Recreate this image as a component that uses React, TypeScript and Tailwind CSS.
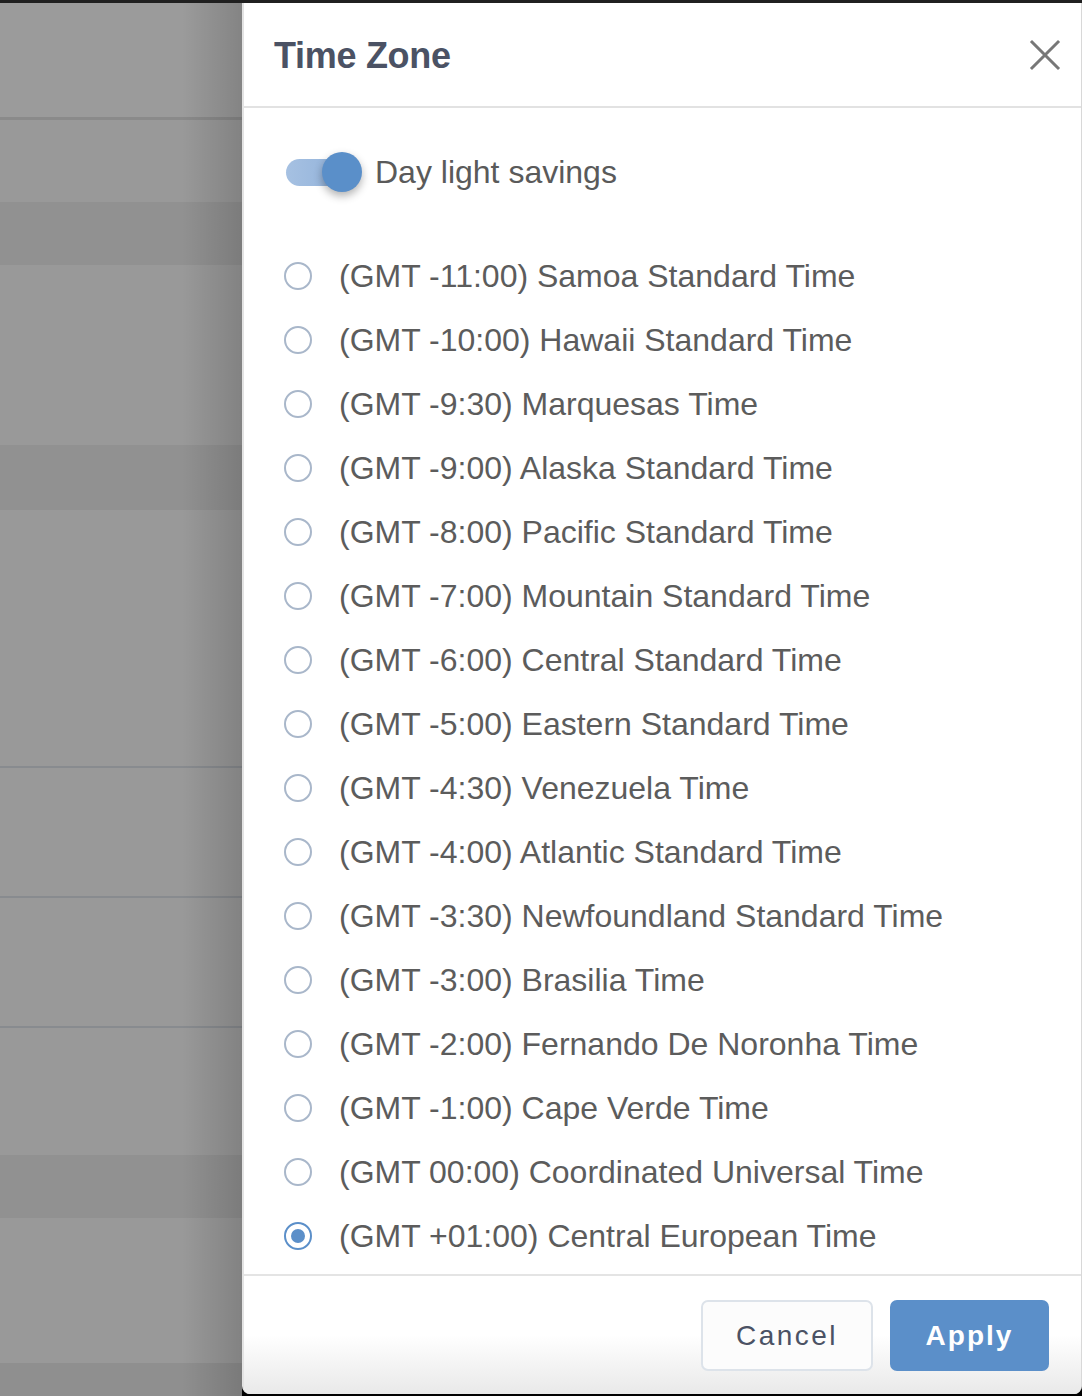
import React from "react";

const zones = [
  "(GMT -11:00) Samoa Standard Time",
  "(GMT -10:00) Hawaii Standard Time",
  "(GMT -9:30) Marquesas Time",
  "(GMT -9:00) Alaska Standard Time",
  "(GMT -8:00) Pacific Standard Time",
  "(GMT -7:00) Mountain Standard Time",
  "(GMT -6:00) Central Standard Time",
  "(GMT -5:00) Eastern Standard Time",
  "(GMT -4:30) Venezuela Time",
  "(GMT -4:00) Atlantic Standard Time",
  "(GMT -3:30) Newfoundland Standard Time",
  "(GMT -3:00) Brasilia Time",
  "(GMT -2:00) Fernando De Noronha Time",
  "(GMT -1:00) Cape Verde Time",
  "(GMT 00:00) Coordinated Universal Time",
  "(GMT +01:00) Central European Time",
];

function Backdrop() {
  return (
    <div className="relative w-[242px] flex flex-col bg-[#999999]">
      <div className="h-[114px] bg-[#9b9b9b]" />
      <div className="h-[3px] bg-[#8a8a8a]" />
      <div className="h-[82px] bg-[#999999]" />
      <div className="h-[63px] bg-[#919191]" />
      <div className="h-[180px] bg-[#999999]" />
      <div className="h-[65px] bg-[#919191]" />
      <div className="h-[256px] bg-[#999999]" />
      <div className="h-[2px] bg-[#888b8f]" />
      <div className="h-[128px] bg-[#999999]" />
      <div className="h-[2px] bg-[#888b8f]" />
      <div className="h-[128px] bg-[#999999]" />
      <div className="h-[2px] bg-[#888b8f]" />
      <div className="h-[127px] bg-[#999999]" />
      <div className="h-[63px] bg-[#919191]" />
      <div className="h-[145px] bg-[#999999]" />
      <div className="flex-1 bg-[#8f8f8f]" />
      <div className="absolute inset-y-0 right-0 w-[60px] bg-gradient-to-r from-transparent to-[rgba(0,0,0,0.15)]" />
    </div>
  );
}

function Radio({ checked }: { checked: boolean }) {
  return checked ? (
    <div className="w-[28px] h-[28px] rounded-full border-[2.5px] border-[#5b8fc9] flex items-center justify-center">
      <div className="w-[14px] h-[14px] rounded-full bg-[#5b8fc9]" />
    </div>
  ) : (
    <div className="w-[28px] h-[28px] rounded-full border-[2.5px] border-[#a9b7ca]" />
  );
}

export default function App() {
  return (
    <div
      className="w-[1082px] h-[1396px] bg-black flex flex-col overflow-hidden"
      style={{ fontFamily: '"Liberation Sans", Arial, Helvetica, sans-serif' }}
    >
      <div className="h-[3px] bg-[#202020] shrink-0" />
      <div className="flex flex-1 min-h-0">
        <Backdrop />
        <div className="flex-1 flex flex-col bg-white border-l-2 border-[#e3e3e3] border-r border-r-[#d8d8d8] rounded-b-[8px] mb-[2px] overflow-hidden">
          {/* Header */}
          <div className="h-[105px] shrink-0 flex items-center justify-between pl-[30px] pr-[19px] border-b-2 border-[#e2e2e2]">
            <h1 className="text-[36px] font-bold text-[#4b5264] tracking-[-0.3px] leading-none mt-[2px]">
              Time Zone
            </h1>
            <svg width="34" height="34" viewBox="0 0 34 34" className="block">
              <path d="M4 4 L30 30 M30 4 L4 30" stroke="#777777" strokeWidth="3" strokeLinecap="square" />
            </svg>
          </div>
          {/* Body */}
          <div className="flex-1 flex flex-col pt-[32px]">
            <div className="h-[64px] flex items-center pl-[42px] mb-[40px]">
              <div className="relative w-[76px] h-[40px] shrink-0">
                <div className="absolute left-0 top-[6.5px] w-[66px] h-[27px] rounded-full bg-gradient-to-r from-[#a6c1e2] to-[#8fb0d9]" />
                <div className="absolute right-0 top-0 w-[40px] h-[40px] rounded-full bg-[#5a8fc9] shadow-[0_4px_8px_rgba(0,0,0,0.3)]" />
              </div>
              <span className="ml-[13px] text-[32px] text-[#5a5a5a] leading-none">Day light savings</span>
            </div>
            <div className="flex flex-col">
              {zones.map((z, i) => (
                <div key={z} className="h-[64px] flex items-center pl-[40px]">
                  <Radio checked={i === zones.length - 1} />
                  <span className="ml-[27px] text-[32px] text-[#5c5c5c] leading-none">{z}</span>
                </div>
              ))}
            </div>
          </div>
          {/* Footer */}
          <div className="h-[120px] shrink-0 border-t-2 border-[#e4e4e4] bg-gradient-to-b from-white via-white to-[#e9e9e9] flex items-start justify-end pt-[24px] pr-[32px] gap-[17px]">
            <button className="w-[172px] h-[71px] rounded-[7px] border-2 border-[#dde3ea] bg-[#fcfcfc] text-[28px] text-[#4b5264] tracking-[2.5px] flex items-center justify-center">
              Cancel
            </button>
            <button className="w-[159px] h-[71px] rounded-[7px] bg-[#5b8fc9] text-[28px] font-bold text-white tracking-[2px] flex items-center justify-center">
              Apply
            </button>
          </div>
        </div>
      </div>
    </div>
  );
}
